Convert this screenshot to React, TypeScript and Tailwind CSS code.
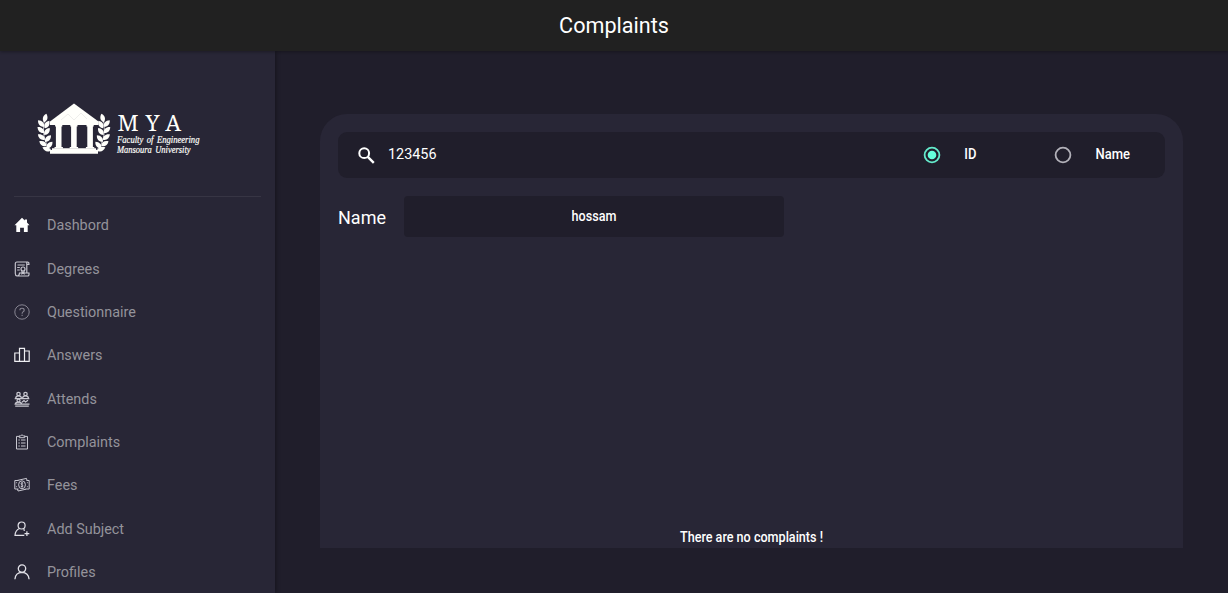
import type { ReactNode } from 'react';

const leaves: [number, number, number][] = [
  [45.2, 118, 15],
  [41, 123.5, -42],
  [47, 124.5, 32],
  [40.8, 130, -48],
  [47, 131.5, 38],
  [41.4, 137, -52],
  [48, 138.5, 42],
  [43, 143.5, -58],
  [49.5, 145, 42],
  [46.5, 149, -68],
];

function Laurel() {
  return (
    <g>
      {leaves.map(([x, y, r]) => (
        <path
          key={`${x}-${y}`}
          d="M0 -4.4C3.1 -1.4 2.9 2.2 0 4.4C-2.9 2.2 -3.1 -1.4 0 -4.4Z"
          transform={`translate(${x} ${y}) rotate(${r})`}
        />
      ))}
      <path d="M44.4 120C42.5 130 43 142 51 150" fill="none" stroke="#fff" strokeWidth="0.7" />
    </g>
  );
}

function Logo() {
  return (
    <svg className="block h-[60px] w-[180px] overflow-visible" viewBox="35 100 180 60" fill="#fffffb">
      <Laurel />
      <g transform="translate(147.8 0) scale(-1 1)">
        <Laurel />
      </g>
      <path d="M74 103.5L98.5 121.5V125H50V121.5Z" />
      <path d="M55.1 125h7.2v1.4h-.8v20.6h1.4v1.6h-8.4v-1.6h1.4v-20.6h-.8zM70.3 125h7.2v1.4h-.8v20.6h1.4v1.6h-8.4v-1.6h1.4v-20.6h-.8zM86.5 125h7.2v1.4h-.8v20.6h1.4v1.6h-8.4v-1.6h1.4v-20.6h-.8z" />
      <path d="M52 148.3H96V150H98V153.8H50V150H52Z" />
      <path d="M61 120L68 114L74 120L81 113L87 119" fill="none" stroke="#d5d5d5" strokeWidth="0.4" />
      <text
        x="117.5"
        y="130.6"
        fontSize="22.5"
        textLength="63.5"
        className="font-['Noto_Serif','Liberation_Serif',serif]"
      >
        MYA
      </text>
      <g
        fontStyle="italic"
        fontSize="10.2"
        stroke="#fffffb"
        strokeWidth="0.2"
        wordSpacing="1.5"
        className="font-['Liberation_Serif',serif]"
      >
        <text x="117" y="142.8" textLength="82.5" lengthAdjust="spacingAndGlyphs">Faculty of Engineering</text>
        <text x="117" y="153.3" textLength="73.5" lengthAdjust="spacingAndGlyphs">Mansoura University</text>
      </g>
    </svg>
  );
}

function Icon({ children }: { children: ReactNode }) {
  return (
    <svg
      className="block size-4 shrink-0"
      viewBox="0 0 16 16"
      fill="none"
      stroke="#c8c7d0"
      strokeWidth="1"
    >
      {children}
    </svg>
  );
}

const items: { label: string; icon: ReactNode }[] = [
  {
    label: 'Dashbord',
    icon: <path d="M8 .7L10.8 3.4V2.4H13V5.5L15.5 8.2H13.7V15H9.9V10.8H6.1V15H2.3V8.2H.5Z" fill="#fff" stroke="none" />,
  },
  {
    label: 'Degrees',
    icon: (
      <g strokeWidth="1.15">
        <path d="M3 1H13.8Q15.2 1.2 15 3.3H12.8V11.6M13.3 1Q12.4 1.6 12.8 3.3M3 1Q1.2 1 1.3 3V12.5Q1.3 14.8 3 15H14Q15.3 14.8 15 12H5.5Q5.4 14.8 3.2 15" />
        <path d="M3.5 4H10.8M3.2 6.5H5.8M3.2 9H5.8M8 10V12.7L9 11.9L10 12.7V10" />
        <circle cx="9" cy="8" r="2" />
      </g>
    ),
  },
  {
    label: 'Questionnaire',
    icon: (
      <g stroke="#878592">
        <circle cx="8" cy="8" r="7.2" />
        <path d="M5.9 6.2Q5.9 4.3 8 4.3Q10.2 4.3 10.2 6.2Q10.2 7.1 9 7.9Q8.1 8.5 8.1 9.7M8.1 10.7V12" strokeWidth="1.1" />
      </g>
    ),
  },
  {
    label: 'Answers',
    icon: <path d="M.8 6H5.5V14.3H.8ZM5.5 14.3V1.4H10.5V14.3M10.5 4H15.2V14.3H.8" stroke="#eeeef2" strokeWidth="1.2" />,
  },
  {
    label: 'Attends',
    icon: (
      <g strokeWidth="1.25">
        <circle cx="4.5" cy="3" r="1.7" />
        <circle cx="11.5" cy="3" r="1.7" />
        <path d="M1.6 7.5Q1.8 4.8 4.5 4.8Q7.4 4.8 7.5 7.5M8.5 7.5Q8.7 4.8 11.5 4.8Q14.3 4.8 14.5 7.5M.7 7.5H15.3" />
        <circle cx="4.5" cy="9.6" r="1.5" />
        <path d="M1.5 13Q1.6 11.2 4.5 11.2Q7.4 11.2 7.5 13M8 11.3L10 9.5L11.5 11L14 9.2M.5 13.2H15.5M1.2 15H14.8" />
      </g>
    ),
  },
  {
    label: 'Complaints',
    icon: (
      <>
        <path d="M5 2.4H2.5V15H13.5V2.4H11M5.3 1.8H6.7Q8 -.2 9.3 1.8H10.7V3.7H5.3Z" />
        <path d="M4.4 6H5.8M7 6H11.5M4.4 9H5.8M7 9H11.5M4.4 12H5.8M7 12H11.5" />
      </>
    ),
  },
  {
    label: 'Fees',
    icon: (
      <>
        <path d="M4.5 3.5H.8V12H4.5M11.5 12H15.2V3.5H12.5M3 3.5L12.5 1.4L13 3.5M3.5 12L4 14L12 12.2" />
        <ellipse cx="8" cy="7.8" rx="3.4" ry="4" />
        <path d="M9.2 6.1Q7 5.3 7 6.8Q7 7.5 8.2 7.9Q9.3 8.4 8.9 9.3Q8.3 10 6.7 9.3M8 5V10.8M2.6 5.2V6.2M2.6 9.2V10.2M13.4 5.2V6.2M13.4 9.2V10.2" strokeWidth=".9" />
      </>
    ),
  },
  {
    label: 'Add Subject',
    icon: (
      <g stroke="#e2e1e8" strokeWidth="1.2">
        <circle cx="7.6" cy="4.5" r="3.5" />
        <path d="M9.8 7.4L10.3 10M5.4 7.5Q1.2 9.4 1 14.4H10.3M12.9 10.2V15M10.5 12.6H15.3" />
      </g>
    ),
  },
  {
    label: 'Profiles',
    icon: (
      <g stroke="#e2e1e8" strokeWidth="1.3">
        <circle cx="8" cy="4.6" r="3.7" />
        <path d="M.9 15.3Q1.5 8.5 8 8.4Q14.4 8.5 15.1 15.3" />
      </g>
    ),
  },
];

function Radio({ label, checked }: { label: string; checked?: boolean }) {
  return (
    <div role="radio" aria-checked={!!checked} className="flex items-center gap-[23px]">
      <svg className="block size-[18px]" viewBox="0 0 18 18">
        <circle cx="9" cy="9" r="7.4" fill="none" stroke={checked ? '#64eacb' : '#b2b1b9'} strokeWidth="1.8" />
        {checked && <circle cx="9" cy="9" r="4.3" fill="#64ffda" />}
      </svg>
      <span className="-mt-px scale-y-[1.08] text-[13px] leading-5 font-medium">{label}</span>
    </div>
  );
}

export default function App() {
  return (
    <div className="flex h-[593px] w-[1228px] flex-col overflow-hidden bg-[#201e2b] font-[Roboto,sans-serif] text-white">
      <header className="z-10 flex h-[51px] shrink-0 items-center justify-center bg-[#212121] shadow-[0_1px_3px_rgba(0,0,0,0.3)]">
        <h1 className="scale-y-[1.04] text-[21.6px] leading-7">Complaints</h1>
      </header>
      <div className="flex min-h-0 flex-1">
        <aside className="w-[275px] shrink-0 bg-[#282636] shadow-[1px_0_4px_rgba(0,0,0,0.35)]">
          <div className="mx-[14px] h-[145.5px] border-b border-[#373544] pt-[49px] pl-[21px]">
            <Logo />
          </div>
          <nav className="pt-[7px]">
            {items.map(({ label, icon }) => (
              <a key={label} className="flex h-[43.35px] items-center gap-[17px] pl-[14px]">
                <Icon>{icon}</Icon>
                <span className="mt-0.5 scale-y-[1.08] text-[14.4px] leading-5 text-[#94939b]">{label}</span>
              </a>
            ))}
          </nav>
        </aside>
        <main className="flex-1 pt-[63px] pr-[45px] pl-[45px]">
          <section className="flex h-[434px] flex-col rounded-t-[27px] bg-[#282636] px-[18px] pt-[18px]">
            <div className="flex h-[46px] shrink-0 items-center rounded-[9px] bg-[#201e2b] pr-[35px] pl-[20px]">
              <svg className="size-[17px]" viewBox="0 0 17 17" fill="none" stroke="#fff" strokeWidth="2">
                <circle cx="6.2" cy="6.2" r="4.9" />
                <path d="M9.8 9.8L15.8 15.8" strokeWidth="2.4" />
              </svg>
              <span className="-mt-px ml-[13px] flex-1 scale-y-[1.08] text-[14.4px] leading-5">123456</span>
              <div className="flex gap-[78px]">
                <Radio label="ID" checked />
                <Radio label="Name" />
              </div>
            </div>
            <div className="mt-[18px] flex items-center">
              <span className="mt-0.5 w-[66px] scale-y-[1.06] text-[18px] leading-6">Name</span>
              <div className="flex h-[41px] w-[380px] items-center justify-center rounded-[4px] bg-[#201e2b] text-[12.6px] font-medium">
                <span className="mt-px scale-y-[1.1]">hossam</span>
              </div>
            </div>
            <p className="mt-auto scale-y-[1.1] text-center text-[12.6px] leading-[21px] font-medium">There are no complaints !</p>
          </section>
        </main>
      </div>
    </div>
  );
}
